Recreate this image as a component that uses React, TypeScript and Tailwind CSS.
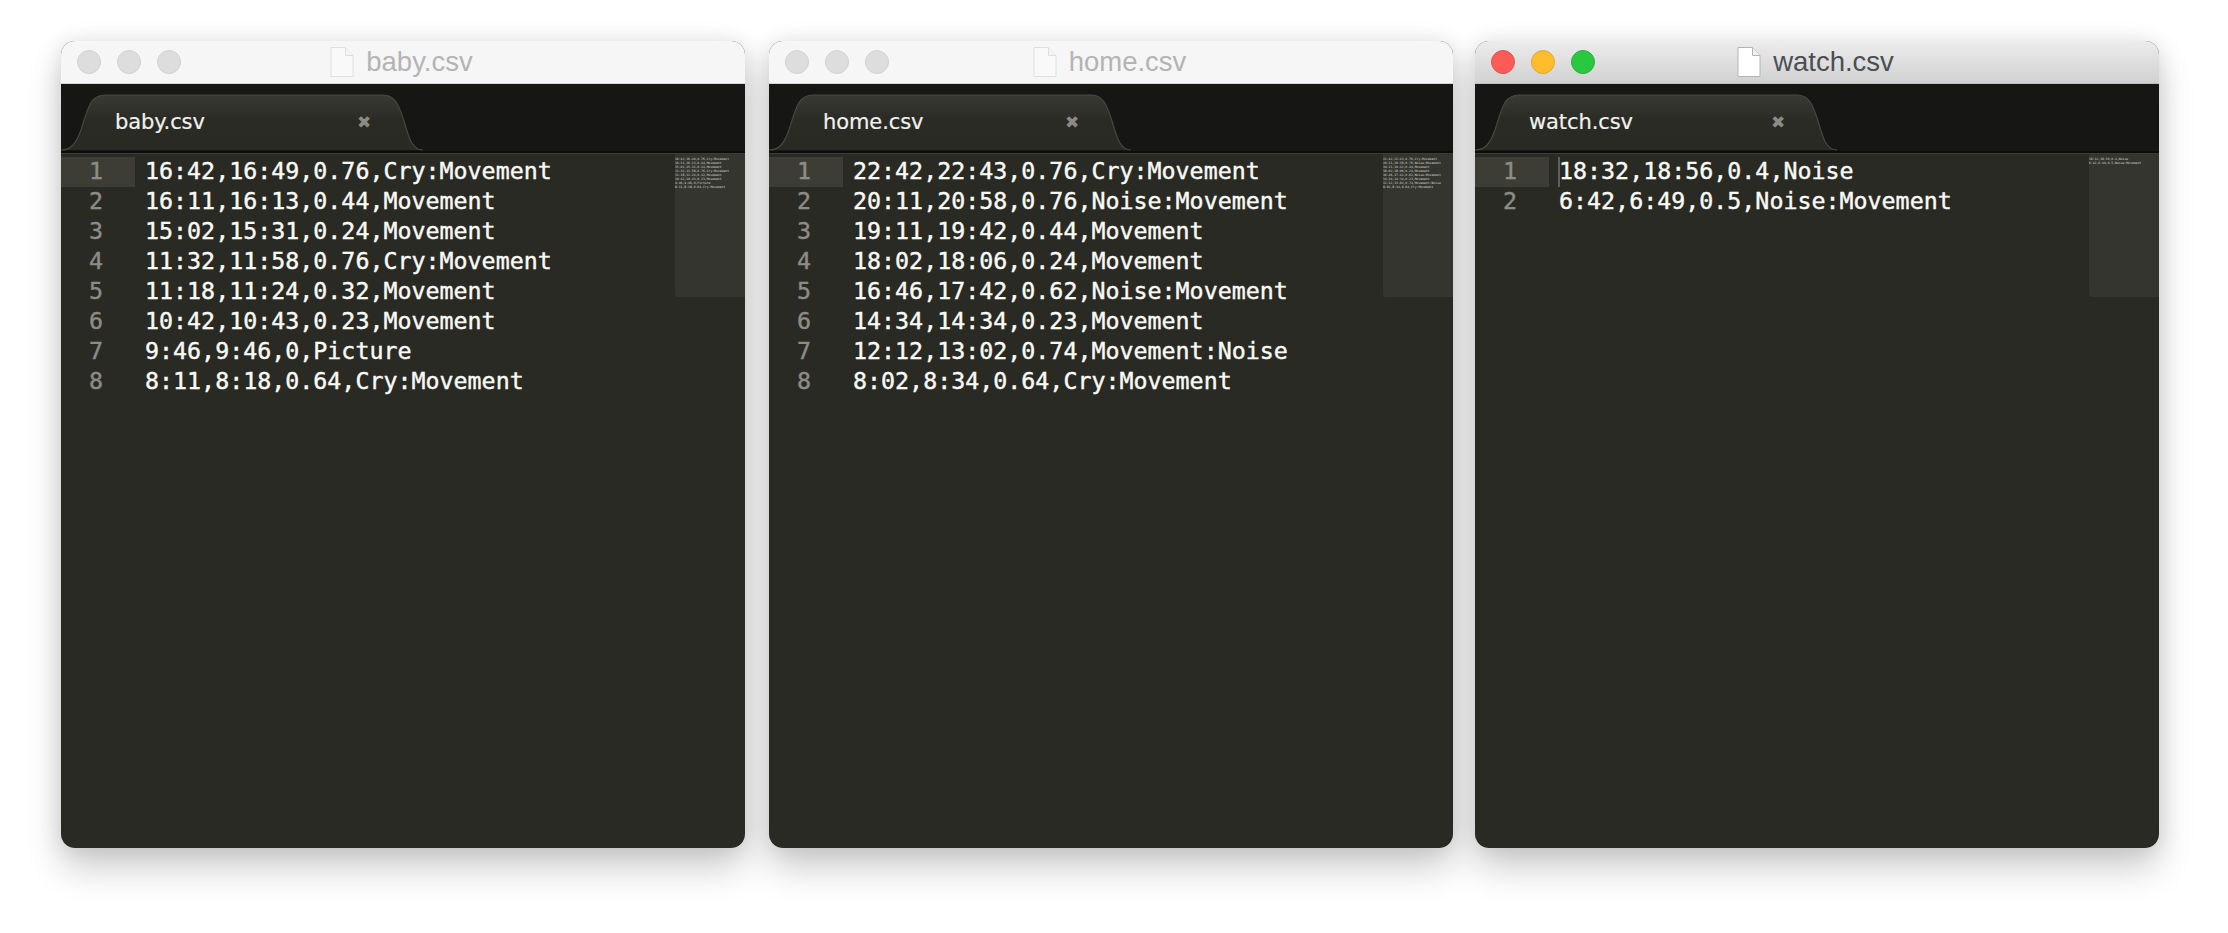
const files = [
  {
    name: "baby.csv",
    active: false,
    lines: [
      "16:42,16:49,0.76,Cry:Movement",
      "16:11,16:13,0.44,Movement",
      "15:02,15:31,0.24,Movement",
      "11:32,11:58,0.76,Cry:Movement",
      "11:18,11:24,0.32,Movement",
      "10:42,10:43,0.23,Movement",
      "9:46,9:46,0,Picture",
      "8:11,8:18,0.64,Cry:Movement",
    ],
  },
  {
    name: "home.csv",
    active: false,
    lines: [
      "22:42,22:43,0.76,Cry:Movement",
      "20:11,20:58,0.76,Noise:Movement",
      "19:11,19:42,0.44,Movement",
      "18:02,18:06,0.24,Movement",
      "16:46,17:42,0.62,Noise:Movement",
      "14:34,14:34,0.23,Movement",
      "12:12,13:02,0.74,Movement:Noise",
      "8:02,8:34,0.64,Cry:Movement",
    ],
  },
  {
    name: "watch.csv",
    active: true,
    lines: ["18:32,18:56,0.4,Noise", "6:42,6:49,0.5,Noise:Movement"],
  },
];

const mono = "font-['DejaVu_Sans_Mono',monospace]";

function TrafficLights({ active }: { active: boolean }) {
  const base = "size-6 rounded-full border";
  return (
    <div className="flex gap-4">
      <div className={`${base} ${active ? "border-[#e5504c] bg-[#fc5b57]" : "border-[#d2d2d2] bg-[#dddddd]"}`} />
      <div className={`${base} ${active ? "border-[#e3a431] bg-[#ffbd2e]" : "border-[#d2d2d2] bg-[#dddddd]"}`} />
      <div className={`${base} ${active ? "border-[#2aae3c] bg-[#28c940]" : "border-[#d2d2d2] bg-[#dddddd]"}`} />
    </div>
  );
}

function FileIcon({ active }: { active: boolean }) {
  const stroke = active ? "#b4b4b4" : "#dedede";
  const fill = active ? "#ffffff" : "#f9f9f9";
  return (
    <svg width="24" height="32" viewBox="0 0 24 32" className="shrink-0">
      <path d="M1 1.5 H15.5 L23 9.5 V30.5 H1 Z" fill={fill} stroke={stroke} strokeWidth="1" />
      <path d="M15.5 1.5 V9.5 H23" fill={active ? "#eeeeee" : "#f4f4f4"} stroke={stroke} strokeWidth="1" />
    </svg>
  );
}

function TabShape({ id }: { id: string }) {
  return (
    <svg width="362" height="57" viewBox="0 0 362 57" className="absolute bottom-0 left-0">
      <defs>
        <linearGradient id={id} x1="0" y1="0" x2="0" y2="1">
          <stop offset="0" stopColor="#3a3a34" />
          <stop offset="0.45" stopColor="#2a2b25" />
          <stop offset="1" stopColor="#292a24" />
        </linearGradient>
      </defs>
      <path
        d="M0 56 C10 56 15 50 20 36 C27 14 29 1 44 1 H322 C335 1 338 12 343 27 C348 44 351 56 362 56 Z"
        fill={`url(#${id})`}
      />
      <path
        d="M0 56 C10 56 15 50 20 36 C27 14 29 1 44 1 H322 C335 1 338 12 343 27 C348 44 351 56 362 56"
        fill="none"
        stroke="#47483f"
        strokeWidth="1.2"
      />
    </svg>
  );
}

function EditorWindow({ name, active, lines }: { name: string; active: boolean; lines: string[] }) {
  return (
    <div className="h-[807px] w-[684px] rounded-[14px] shadow-[0_20px_36px_rgba(0,0,0,0.2),0_0_22px_rgba(0,0,0,0.1)] last:ml-[-2px]">
      <div className="relative flex h-full flex-col overflow-hidden rounded-[14px] bg-[#292a24]">
        <div
          className={`relative flex h-[43px] shrink-0 items-center border-b pl-[16px] ${
            active
              ? "border-[#bdbdbd] bg-gradient-to-b from-[#ececec] to-[#d1d1d1]"
              : "border-[#d4d4d4] bg-[#f6f6f7]"
          }`}
        >
          <TrafficLights active={active} />
          <div className="absolute inset-x-0 top-0 flex h-full items-center justify-center gap-[12px] pb-[1px] pr-[3px]">
            <FileIcon active={active} />
            <span
              className={`font-['Liberation_Sans',sans-serif] text-[27.5px] leading-none ${
                active ? "text-[#4b4e53]" : "text-[#b4b4b4]"
              }`}
            >
              {name}
            </span>
          </div>
        </div>

        <div className="relative flex h-[69px] shrink-0 items-end border-b-2 border-[#0c0c0b] bg-[#161614]">
          <div className="relative flex h-[56px] w-[362px] items-center pb-[2px] pl-[54px]">
            <TabShape id={`tab-${name.split(".")[0]}`} />
            <span className="relative font-['DejaVu_Sans',sans-serif] text-[21px] leading-none tracking-[-0.1px] text-[#f1f1ee] [-webkit-text-stroke:0.2px]">
              {name}
            </span>
            <span className="absolute left-[296px] top-[19px] font-['DejaVu_Sans',sans-serif] text-[17px] font-bold leading-none text-[#8b8b84]">
              ✖
            </span>
          </div>
        </div>

        <div className="relative flex min-h-0 flex-1 border-t border-[#3d3e38] pt-[3px]">
          <div className={`w-[74px] shrink-0 text-[23.3px] leading-[28px] text-[#8d8d85] [-webkit-text-stroke:0.4px] ${mono}`}>
            {lines.map((_, i) => (
              <div key={i} className={`h-[30px] pr-[32px] text-right ${i === 0 ? "bg-[#3e3d35]" : ""}`}>
                {i + 1}
              </div>
            ))}
          </div>
          <div className={`relative pl-[10px] text-[23.3px] leading-[28px] text-[#fafaf5] [-webkit-text-stroke:0.4px] ${mono}`}>
            {active && <div className="absolute left-[9px] top-0 h-[30px] w-[2px] bg-[#5f5f58]" />}
            {lines.map((line) => (
              <div key={line} className="h-[30px] whitespace-pre">
                {line}
              </div>
            ))}
          </div>
          <div
            className={`absolute right-0 top-0 h-[143px] w-[70px] rounded-bl-[3px] bg-[#34352f] pt-[3px] text-[3.1px] leading-[4px] text-[#d8d8d0] ${mono}`}
          >
            {lines.map((line) => (
              <div key={line} className="h-[4px] whitespace-pre">
                {line}
              </div>
            ))}
          </div>
        </div>
      </div>
    </div>
  );
}

export default function App() {
  return (
    <div className="flex h-[933px] items-start gap-[24px] overflow-hidden bg-white pl-[61px] pt-[41px]">
      {files.map((file) => (
        <EditorWindow key={file.name} name={file.name} active={file.active} lines={file.lines} />
      ))}
    </div>
  );
}
